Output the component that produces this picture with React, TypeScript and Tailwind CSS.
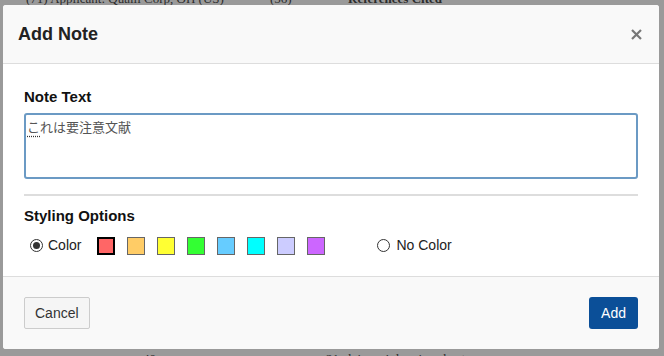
const swatches = [
  { id: 'red', color: '#ff6666' },
  { id: 'orange', color: '#ffcc66' },
  { id: 'yellow', color: '#ffff33' },
  { id: 'green', color: '#33ff33' },
  { id: 'blue', color: '#66ccff' },
  { id: 'cyan', color: '#00ffff' },
  { id: 'lavender', color: '#ccccff' },
  { id: 'purple', color: '#cc66ff' },
];

function Radio({ checked }: { checked?: boolean }) {
  return (
    <span className="w-[13px] h-[13px] rounded-full border border-[#333] bg-white flex items-center justify-center">
      {checked && <span className="w-[7px] h-[7px] rounded-full bg-[#333]" />}
    </span>
  );
}

export default function App() {
  return (
    <div className="relative w-[664px] h-[356px] overflow-hidden bg-[#9a9a9a] font-['Liberation_Sans',Arial,sans-serif]">
      {/* document behind the overlay */}
      <div className="absolute left-[26px] top-[-11px] flex text-[13px] text-[#2b2b2b] font-['Liberation_Serif',serif] whitespace-nowrap">
        <span className="w-[244px] shrink-0">(71) Applicant: Qualli Corp, OH (US)</span>
        <span className="w-[78px] shrink-0">(56)</span>
        <span className="font-bold">References Cited</span>
      </div>
      <div className="absolute left-[143px] top-[349px] flex gap-[170px] text-[13px] text-[#2b2b2b] font-['Liberation_Serif',serif] whitespace-nowrap">
        <span>40</span>
        <span>21 claims, 4 drawing sheets</span>
      </div>

      {/* Modal */}
      <div className="relative mt-[5px] ml-[3px] w-[656px] h-[344px] bg-white rounded-[3px] overflow-hidden flex flex-col">
        <div className="h-[59px] shrink-0 bg-[#f9f9f9] border-b border-[#dddddd] flex items-center justify-between pl-[15px] pr-[17px]">
          <h2 className="text-[18px] font-bold text-[#222] leading-none">Add Note</h2>
          <svg width="11" height="11" viewBox="0 0 11 11">
            <path d="M1 1 L10 10 M10 1 L1 10" stroke="#777" strokeWidth="2.2" />
          </svg>
        </div>

        <div className="flex-1 px-[21px] pt-[24px]">
          <div className="text-[15px] font-bold text-[#111] leading-[17px] mb-[8px]">Note Text</div>
          <div className="h-[66px] border-2 border-[#6b9ac4] rounded-[3px] px-[1px] pt-[3px] text-[13px] text-[#555] font-['Noto_Sans_CJK_JP',sans-serif] leading-[18px]">
            <span className="underline decoration-dotted decoration-[#333] underline-offset-4">こ</span>れは要注意文献
          </div>
          <div className="mt-[15px] h-[2px] bg-[#dddddd]" />
          <div className="mt-[11px] text-[15px] font-bold text-[#111] leading-[17px]">Styling Options</div>
          <div className="mt-[11px] flex items-center text-[14px] text-[#222]">
            <span className="ml-[6px]"><Radio checked /></span>
            <span className="ml-[5px]">Color</span>
            <div className="ml-[16px] flex gap-[12px]">
              {swatches.map((s, i) => (
                <span
                  key={s.id}
                  className={`w-[18px] h-[18px] ${i === 0 ? 'border-2 border-black' : 'border border-[#666]'}`}
                  style={{ backgroundColor: s.color }}
                />
              ))}
            </div>
            <span className="ml-[52px]"><Radio /></span>
            <span className="ml-[6px]">No Color</span>
          </div>
        </div>

        <div className="h-[73px] shrink-0 bg-[#f9f9f9] border-t border-[#dddddd] flex items-center justify-between px-[21px]">
          <button className="h-[32px] px-[10px] bg-[#f5f5f5] border border-[#cccccc] rounded-[2px] text-[14px] text-[#333]">
            Cancel
          </button>
          <button className="h-[32px] px-[12px] bg-[#0b4f98] rounded-[3px] text-[14px] text-white">
            Add
          </button>
        </div>
      </div>
    </div>
  );
}
